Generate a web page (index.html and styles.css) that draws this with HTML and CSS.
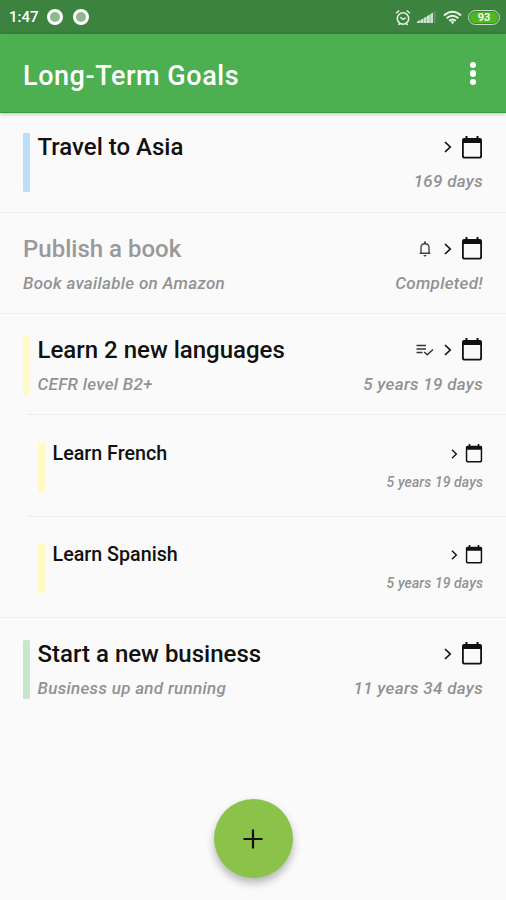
FILE: index.html
```
<!DOCTYPE html>
<html lang="en">
<head>
<meta charset="utf-8">
<title>Long-Term Goals</title>
<link rel="stylesheet" href="styles.css">
</head>
<body>
<svg class="defs" width="0" height="0" aria-hidden="true">
  <symbol id="calendar" viewBox="0 0 22 23">
    <path d="M3 2h16q2 0 2 2v16.500q0 2-2 2H3q-2 0-2-2V4q0-2 2-2zM2.800 7v12.700q0 1 1 1h14.400q1 0 1-1V7z" fill-rule="evenodd"/>
    <path d="M4.500 0h2v4h-2zM15.500 0h2v4h-2z"/>
  </symbol>
  <symbol id="chevron" viewBox="0 0 8 12"><path d="M1 1l5.200 5L1 11" fill="none" stroke="currentColor" stroke-width="1.700"/></symbol>
</svg>
<div class="status">
  <span class="time">1:47</span><i class="ring"></i><i class="ring"></i>
  <div class="system">
    <svg class="alarm line" viewBox="0 0 16 17" stroke="currentColor"><circle cx="8" cy="9.500" r="5.700" stroke-width="1.600"/><path d="M5.300 8.200L8 10.300l2.700-1.500M1 4.200L4.200 1.500M11.800 1.500L15 4.200M3.500 16l1.500-2M12.500 16L11 14" stroke-width="1.400"/></svg>
    <svg class="signal" viewBox="0 0 19 13"><path d="M0 12v-1.500l3-1.300V12zM3.400 12V9l2.900-1.500V12zM6.700 12V7l2.900-1.500V12zM10 12V5l2.900-1.500V12zM13.300 12V3L16 1.500V12z"/><path d="M17 0h1.500v12H17z" opacity=".25"/></svg>
    <svg class="wifi line" viewBox="0 0 20 15" stroke="currentColor" stroke-width="2.100"><path d="M1 5.300q9-7.800 18 0M3.800 8.300q6.200-5.300 12.400 0M6.500 11q3.500-2.800 7 0"/><path d="M7.700 11.500h4.600L10 14.500z" fill="currentColor" stroke="none"/></svg>
    <span class="battery"><b>93</b></span>
  </div>
</div>
<header class="bar">
  <h1>Long-Term Goals</h1>
  <div class="more"><i></i><i></i><i></i></div>
</header>
<main class="list">
  <section class="goal first">
    <i class="tag blue"></i>
    <div class="text"><h2>Travel to Asia</h2></div>
    <div class="side"><div class="icons"><svg class="chev"><use href="#chevron"/></svg><svg class="cal"><use href="#calendar"/></svg></div><p>169 days</p></div>
  </section>
  <section class="goal done">
    <div class="text"><h2>Publish a book</h2><p>Book available on Amazon</p></div>
    <div class="side"><div class="icons"><svg class="bell" viewBox="0 0 14 16"><path d="M3 12V6.700Q3 2.700 7 2.700t4 4V12" fill="none" stroke="#444" stroke-width="1.400"/><path d="M6 .5h2v2H6zM1 13l2.500-2.500v1.100h7v-1.100L13 13zM5.500 14h3q-.2 1.600-1.500 1.600T5.500 14z" fill="#444"/></svg><svg class="chev"><use href="#chevron"/></svg><svg class="cal"><use href="#calendar"/></svg></div><p>Completed!</p></div>
  </section>
  <section class="goal parent">
    <i class="tag yellow"></i>
    <div class="text"><h2>Learn 2 new languages</h2><p>CEFR level B2+</p></div>
    <div class="side"><div class="icons"><svg class="check line" viewBox="0 0 18 12" stroke="#333"><path d="M.5 1.500H10M.5 5H10M.5 8.500h6" stroke-width="1.400"/><path d="M8.300 8l2.900 2.700L17 5.500" stroke-width="1.500"/></svg><svg class="chev"><use href="#chevron"/></svg><svg class="cal"><use href="#calendar"/></svg></div><p>5 years 19 days</p></div>
  </section>
  <section class="goal sub inset">
    <i class="tag yellow"></i>
    <div class="text"><h2>Learn French</h2></div>
    <div class="side"><div class="icons"><svg class="chev"><use href="#chevron"/></svg><svg class="cal"><use href="#calendar"/></svg></div><p>5 years 19 days</p></div>
  </section>
  <section class="goal sub">
    <i class="tag yellow"></i>
    <div class="text"><h2>Learn Spanish</h2></div>
    <div class="side"><div class="icons"><svg class="chev"><use href="#chevron"/></svg><svg class="cal"><use href="#calendar"/></svg></div><p>5 years 19 days</p></div>
  </section>
  <section class="goal last">
    <i class="tag green"></i>
    <div class="text"><h2>Start a new business</h2><p>Business up and running</p></div>
    <div class="side"><div class="icons"><svg class="chev"><use href="#chevron"/></svg><svg class="cal"><use href="#calendar"/></svg></div><p>11 years 34 days</p></div>
  </section>
</main>
<footer class="actions">
  <button class="fab" aria-label="Add goal"><svg viewBox="0 0 20 20"><path d="M10 .5v19M.5 10h19" stroke="#111" stroke-width="2.200"/></svg></button>
</footer>
</body>
</html>
```
FILE: styles.css
```
* { box-sizing: border-box; }
body {
  margin: 0;
  height: 900px;
  display: flex;
  flex-direction: column;
  overflow: hidden;
  background: #fafafa;
  color: #111;
  font-family: Roboto, sans-serif;
}
h1, h2, p { margin: 0; }
h1, h2 { font-weight: 500; white-space: nowrap; }
svg { display: block; fill: currentColor; flex: none; }
.line { fill: none; }
.defs { position: absolute; }

.status {
  height: 34px;
  flex: none;
  display: flex;
  align-items: center;
  padding: 0 6px 0 9px;
  background: #3b833f;
  color: #e8f3e6;
}
.time { width: 38px; font-size: 15px; font-weight: 500; color: #fff; }
.ring {
  width: 16px;
  height: 16px;
  margin-right: 10px;
  border: 3.500px solid #fff;
  border-radius: 50%;
  background: #8fb890;
}
.system { margin-left: auto; display: flex; align-items: center; }
.alarm { width: 16px; height: 17px; margin-right: 6px; }
.signal { width: 19px; height: 13px; margin-right: 7px; opacity: .85; }
.wifi { width: 19px; height: 15px; margin-right: 6px; }
.battery {
  width: 32px;
  height: 15px;
  padding: 1px;
  border: 1.500px solid #c8dfc5;
  border-radius: 8px;
}
.battery b {
  display: block;
  height: 11px;
  border-radius: 5.500px;
  background: #4fb81c;
  color: #fff;
  font-size: 11px;
  line-height: 11px;
  text-align: center;
}

.bar {
  height: 79px;
  flex: none;
  display: flex;
  align-items: center;
  justify-content: space-between;
  padding: 5px 30px 0 23px;
  background: #4caf50;
  border-bottom: 1px solid #339b38;
  box-shadow: 0 1px 4px rgba(0, 0, 0, .25);
  color: #fff;
}
.bar h1 { font-size: 27px; letter-spacing: .55px; }
.more { display: grid; gap: 2px; padding-bottom: 4px; }
.more i { width: 6.500px; height: 6.500px; border-radius: 50%; background: #fff; }

.goal {
  height: 101.300px;
  display: flex;
  padding: 22px 23px 0 23px;
  border-bottom: 1px solid #eee;
}
.first { height: 99.700px; padding-top: 19.500px; }
.last { border: 0; }
.tag { width: 7px; height: 59.500px; margin-right: 7.500px; border-radius: 1.500px; }
.blue { background: #bbdefb; }
.yellow { background: #fff9c4; }
.green { background: #c8e6c9; }
.text { flex: 1; }
.goal h2 { font-size: 24px; line-height: 28px; }
.goal p {
  margin-top: 5.500px;
  font-size: 17px;
  line-height: 30px;
  letter-spacing: .3px;
  font-style: italic;
  font-weight: 500;
  color: #929292;
  white-space: nowrap;
}
.done h2 { color: #999; }
.side { text-align: right; }
.icons { height: 28px; display: flex; align-items: center; justify-content: flex-end; }
.first .icons { padding-top: 1px; }
.cal { width: 22px; height: 23px; }
.chev { width: 8px; height: 12px; margin-right: 9px; }
.bell { width: 14px; height: 16px; margin-right: 12px; }
.check { width: 18px; height: 12px; margin-right: 10px; }

.parent, .inset {
  border-image: linear-gradient(to right, transparent 28px, #eee 28px) 1;
}
.sub { padding: 26.300px 23px 0 38px; }
.sub .tag { height: 50px; }
.sub h2 { font-size: 19.700px; line-height: 24px; }
.sub .icons { height: 24px; }
.sub .cal { width: 18px; height: 19px; }
.sub .chev { width: 7px; height: 10px; margin-right: 7px; }
.sub p { margin-top: 4.500px; font-size: 14px; line-height: 24px; letter-spacing: .1px; }

.actions { margin-top: auto; padding-bottom: 22px; display: flex; justify-content: center; }
.fab {
  width: 79px;
  height: 79px;
  padding: 0;
  display: grid;
  place-items: center;
  border: 0;
  border-radius: 50%;
  background: #8bc34a;
  box-shadow: 0 5px 9px rgba(0, 0, 0, .28);
}
.fab svg { width: 20px; height: 20px; }
```
